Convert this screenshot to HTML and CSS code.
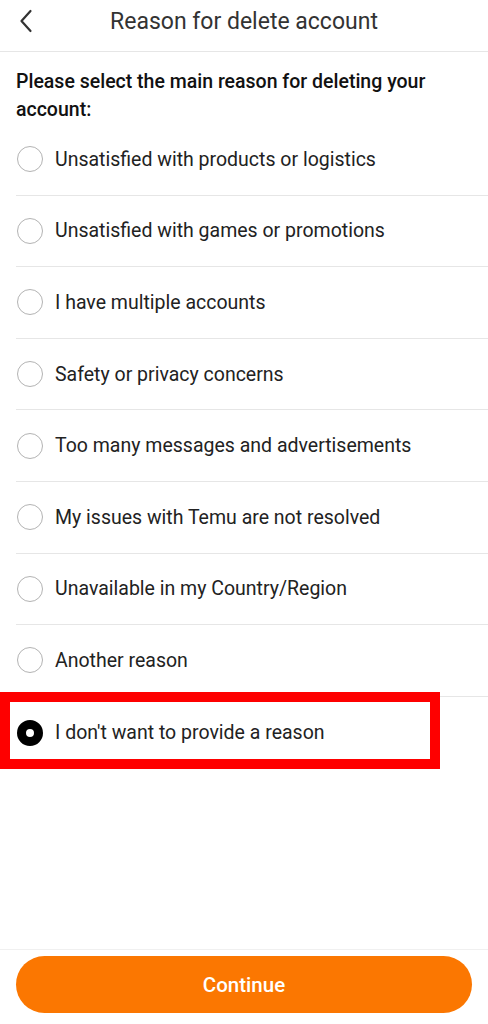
FILE: index.html
```html
<!DOCTYPE html>
<html lang="en">
<head>
    <meta charset="UTF-8">
    <meta name="viewport" content="width=device-width, initial-scale=1.0">
    <title>Reason for delete account</title>
    <link rel="stylesheet" href="styles.css">
</head>
<body>
    <div class="page">
        <div class="header">
            <svg class="back" width="14" height="24" viewBox="0 0 14 24">
                <path d="M11.5 2 L2.5 12 L11.5 22" fill="none" stroke="#333" stroke-width="2.2" stroke-linecap="round" stroke-linejoin="round"/>
            </svg>
            <h1 class="title">Reason for delete account</h1>
        </div>

        <p class="intro">Please select the main reason for deleting your account:</p>

        <ul class="reasons">
            <li class="reason"><span class="radio"></span>Unsatisfied with products or logistics</li>
            <li class="reason"><span class="radio"></span>Unsatisfied with games or promotions</li>
            <li class="reason"><span class="radio"></span>I have multiple accounts</li>
            <li class="reason"><span class="radio"></span>Safety or privacy concerns</li>
            <li class="reason"><span class="radio"></span>Too many messages and advertisements</li>
            <li class="reason"><span class="radio"></span>My issues with Temu are not resolved</li>
            <li class="reason"><span class="radio"></span>Unavailable in my Country/Region</li>
            <li class="reason"><span class="radio"></span>Another reason</li>
            <li class="reason selected">
                <span class="radio"></span>I don't want to provide a reason
                <span class="highlight"></span>
            </li>
        </ul>

        <div class="footer">
            <button class="continue">Continue</button>
        </div>
    </div>
</body>
</html>
```

FILE: styles.css
```css
* {
    box-sizing: border-box;
}

body {
    margin: 0;
    font-family: Roboto, "Noto Sans", Arial, sans-serif;
    background-color: #fff;
    color: #222;
}

.page {
    display: flex;
    flex-direction: column;
    min-height: 1024px;
}

.header {
    position: relative;
    height: 52px;
    border-bottom: 1px solid #e6e6e6;
    display: flex;
    align-items: center;
    justify-content: center;
}

.back {
    position: absolute;
    left: 19px;
    top: 9px;
}

.title {
    margin: 0;
    margin-top: -9px;
    font-size: 23px;
    font-weight: 400;
    color: #333;
}

.intro {
    margin: 0;
    padding: 16px 16px 0;
    font-size: 19.5px;
    font-weight: 500;
    line-height: 28px;
    color: #111;
}

.reasons {
    list-style: none;
    margin: 0;
    padding: 0 0 0 16px;
}

.reason {
    position: relative;
    height: 71.6px;
    display: flex;
    align-items: center;
    gap: 12px;
    font-size: 19.5px;
    color: #222;
    border-bottom: 1px solid #e6e6e6;
}

.reason.selected {
    border-bottom: none;
}

.radio {
    width: 26px;
    height: 26px;
    margin-left: 1px;
    border-radius: 50%;
    border: 1.6px solid #b3b3b3;
    flex-shrink: 0;
}

.selected .radio {
    border: 9px solid #000;
}

.highlight {
    position: absolute;
    left: -16px;
    top: -5px;
    width: 440px;
    height: 77px;
    border: 10px solid #fe0000;
}

.footer {
    margin-top: auto;
    border-top: 1px solid #f0f0f0;
    padding: 6px 16px 11px;
}

.continue {
    width: 100%;
    height: 57px;
    border: none;
    border-radius: 29px;
    background-color: #fb7701;
    color: #fff;
    font-family: Roboto, "Noto Sans", Arial, sans-serif;
    font-size: 20.5px;
    font-weight: 500;
    cursor: pointer;
}
```
